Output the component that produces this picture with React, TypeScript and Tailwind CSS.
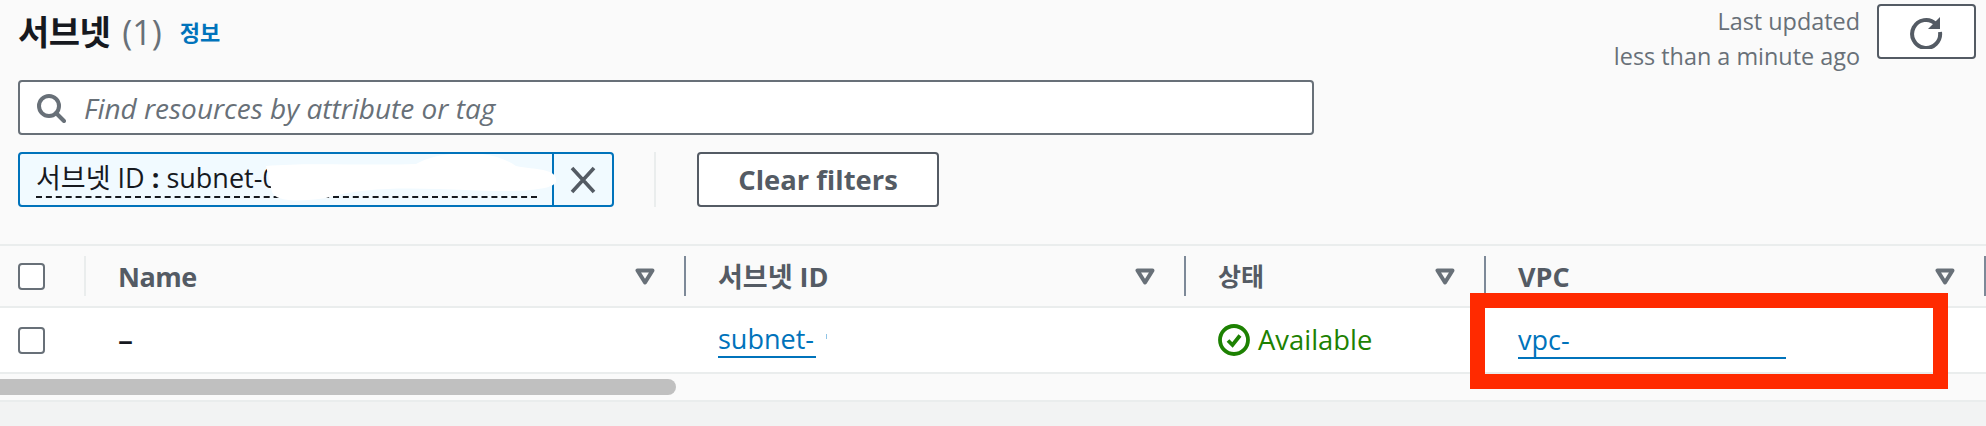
const font = { fontFamily: '"Open Sans", "Noto Sans CJK KR", sans-serif' };

function FilterMark() {
  return (
    <svg width="20" height="17" viewBox="0 0 20 17" className="shrink-0">
      <path d="M2.5 2.5H17.5L10 14.5Z" fill="none" stroke="#687078" strokeWidth="4" strokeLinejoin="round" />
    </svg>
  );
}

function Box() {
  return <span className="block w-[27px] h-[27px] rounded-[4px] border-2 border-[#687078] bg-white" />;
}

function HeadCell({ label, className, textClass }: { label: string; className: string; textClass: string }) {
  return (
    <div className={`flex items-center h-[40px] pl-[32px] border-r-2 border-[#7d8998] ${className}`}>
      <span className={`font-bold text-[#545b64] leading-none ${textClass}`}>{label}</span>
      <span className="ml-auto mr-[29px]">
        <FilterMark />
      </span>
    </div>
  );
}

export default function App() {
  return (
    <div style={font} className="relative w-[1986px] h-[426px] overflow-hidden bg-[#f2f3f3]">
      <div className="bg-[#fafafa]">
        <header className="flex h-[152px] items-start">
          <div className="pl-[18px] flex flex-col">
            <div className="flex items-center h-[62px] pt-[2px]">
              <h1 className="text-[34px] font-bold text-[#16191f] leading-none tracking-[-0.5px]">서브넷</h1>
              <span className="ml-[12px] text-[34px] text-[#687078] leading-none">(1)</span>
              <a className="ml-[18px] text-[22px] font-bold text-[#0073bb] leading-none">정보</a>
            </div>
            <div className="mt-[18px] w-[1296px] h-[55px] flex items-center rounded-[4px] border-2 border-[#687078] bg-white pl-[16px]">
              <svg width="30" height="30" viewBox="0 0 30 30" fill="none" stroke="#687078" strokeWidth="4">
                <circle cx="13" cy="13" r="10" />
                <path d="M20 20L28 28" strokeLinecap="round" />
              </svg>
              <span className="ml-[18px] text-[28px] italic text-[#687078] leading-none">Find resources by attribute or tag</span>
            </div>
          </div>
          <div className="ml-auto flex items-start mt-[4px] mr-[10px]">
            <div className="text-[23.4px] leading-[35px] text-[#687078] text-right">
              <div>Last updated</div>
              <div>less than a minute ago</div>
            </div>
            <button className="ml-[17px] w-[99px] h-[55px] rounded-[4px] border-2 border-[#545b64] bg-white flex items-center justify-center">
              <svg width="34" height="34" viewBox="0 0 34 34" fill="none">
                <path d="M26 9A14 14 0 1 0 30 17" stroke="#545b64" strokeWidth="4" />
                <path d="M30 2V14H18Z" fill="#545b64" />
              </svg>
            </button>
          </div>
        </header>

        <div className="flex items-start pl-[18px] h-[92px]">
          <div className="relative flex w-[596px] h-[55px] rounded-[4px] border-2 border-[#0073bb] bg-[#f1faff] overflow-hidden">
            <div className="flex-1 pl-[16px] text-[27px] text-[#16191f] leading-[48px] relative whitespace-nowrap">
              <span>서브넷 ID <b>:</b> subnet-0</span>
              <span className="absolute left-[16px] right-[15px] bottom-[7px] border-b-2 border-dashed border-[#16191f]" />
              <svg className="absolute left-[246px] top-[-2px]" width="292" height="50" viewBox="0 0 292 50">
                <path d="M0 14C40 10 100 14 150 12C175 -2 225 -4 250 14C270 18 292 16 290 30C285 40 240 40 200 38C150 36 100 34 60 46C35 50 10 50 6 40Z" fill="#fff" />
              </svg>
            </div>
            <div className="w-[60px] border-l-2 border-[#0073bb] flex items-center justify-center shrink-0">
              <svg width="28" height="28" viewBox="0 0 28 28" stroke="#545b64" strokeWidth="3.6">
                <path d="M3 2L25 26M25 2L3 26" />
              </svg>
            </div>
          </div>
          <div className="ml-[40px] w-[2px] h-[55px] bg-[#eaeded]" />
          <button className="ml-[41px] w-[242px] h-[55px] rounded-[4px] border-2 border-[#545b64] bg-white text-[27.4px] font-bold text-[#545b64] leading-none">
            Clear filters
          </button>
        </div>

        <div className="border-t-2 border-[#eaeded] h-[62px] flex items-center">
          <div className="w-[86px] h-[40px] pl-[18px] flex items-center border-r-2 border-[#eaeded] shrink-0">
            <Box />
          </div>
          <HeadCell label="Name" textClass="text-[27px] tracking-[-0.5px]" className="w-[600px] shrink-0" />
          <HeadCell label="서브넷 ID" textClass="text-[27px]" className="w-[500px] shrink-0" />
          <HeadCell label="상태" textClass="text-[25px]" className="w-[300px] shrink-0" />
          <HeadCell label="VPC" textClass="text-[27px]" className="w-[500px] shrink-0" />
        </div>

        <div className="border-y-2 border-[#eaeded] h-[68px] bg-white flex items-center">
          <div className="w-[86px] pl-[18px] shrink-0">
            <Box />
          </div>
          <div className="w-[600px] pl-[32px] shrink-0 text-[30px] font-semibold text-[#16191f] leading-none">–</div>
          <div className="w-[500px] pl-[32px] shrink-0">
            <span className="relative inline-block w-[98px] text-[27px] text-[#0073bb] leading-[34px] border-b-2 border-[#0073bb]">subnet-</span>
            <span className="inline-block ml-[10px] w-px h-[5px] mb-[10px] bg-[#8fc4e6]" />
          </div>
          <div className="w-[300px] pl-[32px] shrink-0 flex items-center">
            <svg width="32" height="32" viewBox="0 0 32 32" fill="none" stroke="#1d8102" strokeWidth="3.8">
              <circle cx="16" cy="16" r="14" />
              <path d="M10 16.5L14.5 21L22 11.5" strokeWidth="3.8" />
            </svg>
            <span className="ml-[8px] text-[27.4px] text-[#1d8102] leading-none">Available</span>
          </div>
          <div className="w-[500px] pl-[32px] shrink-0">
            <span className="inline-block w-[268px] pt-[2px] text-[27px] text-[#0073bb] leading-[34px] border-b-2 border-[#0073bb]">vpc-</span>
          </div>
        </div>

        <div className="h-[28px] border-b-2 border-[#eaeded] flex items-center">
          <div className="w-[676px] h-[16px] rounded-r-[8px] bg-[#c0c0c0]" />
        </div>
      </div>

      <div className="absolute left-[1470px] top-[293px] w-[478px] h-[96px] border-[15px] border-[#ff2a00]" />
    </div>
  );
}
